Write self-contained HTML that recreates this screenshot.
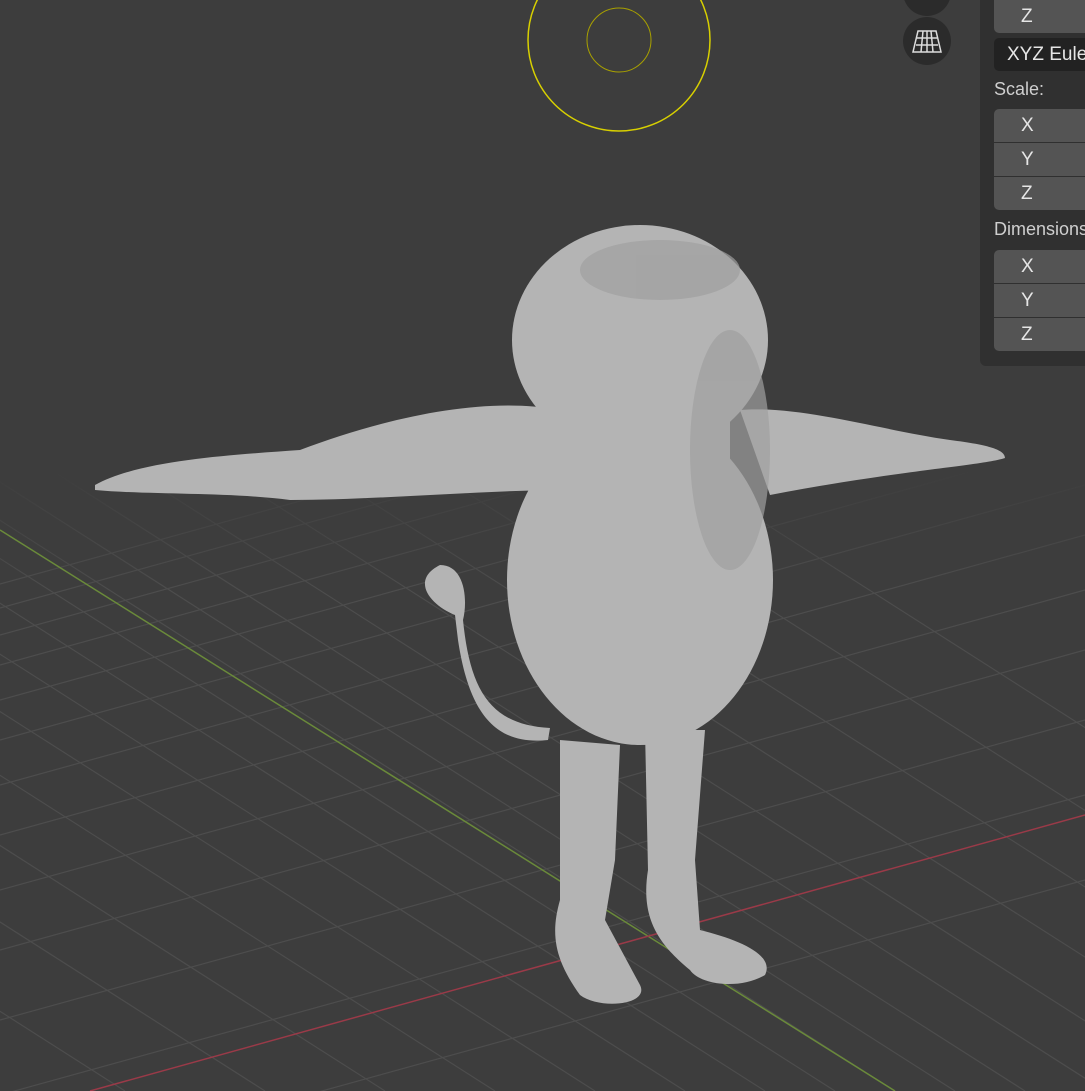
<!DOCTYPE html>
<html style="overflow:hidden"><head><style>
html,body{margin:0;width:1085px;height:1091px;overflow:hidden;background:#3d3d3d;font-family:"Liberation Sans","DejaVu Sans",sans-serif;position:relative}
.p{position:absolute;left:980px;top:0;width:105px;height:366px;background:#303030;border-bottom-left-radius:6px}
.f{position:absolute;left:994px;width:91px;background:#545454;color:#e6e6e6;font-size:19px;box-sizing:border-box;padding-left:27px;height:33px;line-height:33px;white-space:nowrap;overflow:hidden}
.l{position:absolute;left:994px;color:#cfcfcf;font-size:18px;white-space:nowrap}
</style></head><body>
<svg width="1085" height="1091" style="position:absolute;left:0;top:0;display:block">
<defs><linearGradient id="g" x1="0" y1="0" x2="0" y2="1"><stop offset="0" stop-color="#3d3d3d" stop-opacity="1"/><stop offset="1" stop-color="#3d3d3d" stop-opacity="0"/></linearGradient>
<clipPath id="c"><rect x="0" y="470" width="1085" height="621"/></clipPath></defs>
<g stroke="#4d4d4d" stroke-width="1.2" clip-path="url(#c)">
<line x1="-1600" y1="-500" x2="895" y2="1091"/>
<line x1="-1540" y1="-500" x2="955" y2="1091"/>
<line x1="-1470" y1="-500" x2="1025" y2="1091"/>
<line x1="-1390" y1="-500" x2="1105" y2="1091"/>
<line x1="-1300" y1="-500" x2="1195" y2="1091"/>
<line x1="-1200" y1="-500" x2="1295" y2="1091"/>
<line x1="-1090" y1="-500" x2="1405" y2="1091"/>
<line x1="-970" y1="-500" x2="1525" y2="1091"/>
<line x1="-840" y1="-500" x2="1655" y2="1091"/>
<line x1="-1660" y1="-500" x2="835" y2="1091"/>
<line x1="-1730" y1="-500" x2="765" y2="1091"/>
<line x1="-1810" y1="-500" x2="685" y2="1091"/>
<line x1="-1900" y1="-500" x2="595" y2="1091"/>
<line x1="-2000" y1="-500" x2="495" y2="1091"/>
<line x1="-2110" y1="-500" x2="385" y2="1091"/>
<line x1="-2230" y1="-500" x2="265" y2="1091"/>
<line x1="-2370" y1="-500" x2="125" y2="1091"/>
<line x1="0" y1="1180" x2="1085" y2="880"/>
<line x1="0" y1="1095" x2="1085" y2="795"/>
<line x1="0" y1="1020" x2="1085" y2="720"/>
<line x1="0" y1="950" x2="1085" y2="650"/>
<line x1="0" y1="890" x2="1085" y2="590"/>
<line x1="0" y1="835" x2="1085" y2="535"/>
<line x1="0" y1="785" x2="1085" y2="485"/>
<line x1="0" y1="740" x2="1085" y2="440"/>
<line x1="0" y1="700" x2="1085" y2="400"/>
<line x1="0" y1="665" x2="1085" y2="365"/>
<line x1="0" y1="635" x2="1085" y2="335"/>
<line x1="0" y1="608" x2="1085" y2="308"/>
<line x1="0" y1="584" x2="1085" y2="284"/>
</g>
<rect x="0" y="470" width="1085" height="120" fill="url(#g)"/>
<line x1="0" y1="530" x2="895" y2="1091" stroke="#6a8a3a" stroke-width="1.5"/>
<line x1="90" y1="1091" x2="1085" y2="815" stroke="#9a3a48" stroke-width="1.5"/>
<circle cx="619" cy="40" r="91" fill="none" stroke="#d8d000" stroke-width="1.5"/>
<circle cx="619" cy="40" r="32" fill="none" stroke="#a8a000" stroke-width="1"/>
<circle cx="927" cy="41" r="24" fill="#2b2b2b"/>
<circle cx="927" cy="-8" r="24" fill="#2b2b2b"/>
<path d="M913 52 L941 52 L936 31 L918 31 Z M916 45 H938 M917 38 H937 M923 31 L921 52 M927 31 V52 M931 31 L933 52" stroke="#ddd" stroke-width="1.5" fill="none"/>
<g fill="#b4b4b4">
<path d="M95 485 C140 460 230 455 300 450 C380 420 480 395 560 410 L570 490 C480 490 380 500 290 500 C230 492 150 495 95 490Z"/>
<path d="M740 410 C800 405 880 430 950 440 C990 445 1005 450 1005 458 C980 466 900 470 770 495Z"/>
<ellipse cx="640" cy="580" rx="133" ry="165"/>
<ellipse cx="640" cy="340" rx="128" ry="115"/>
<rect x="560" y="400" width="170" height="80"/>
<path d="M560 740 L620 745 L615 860 L605 920 L640 985 C650 1005 600 1010 580 995 C555 960 550 935 560 900Z"/>
<path d="M645 730 L705 730 L695 860 L700 930 C740 940 775 955 765 975 C740 990 700 985 690 970 C660 945 640 920 648 870Z"/>
<path d="M548 740 C500 745 470 720 458 640 L455 615 C430 605 410 580 440 565 C465 565 468 600 463 620 C470 690 490 725 550 728Z"/>
</g>
<g fill="#a0a0a0" opacity="0.7">
<ellipse cx="730" cy="450" rx="40" ry="120"/>
<ellipse cx="660" cy="270" rx="80" ry="30"/>
</g>
</svg>
<div class="p"></div>
<div class="f" style="top:0;border-radius:0 0 0 5px">Z</div>
<div class="f" style="top:38px;background:#222;padding-left:13px;border-radius:5px 0 0 5px">XYZ Euler</div>
<div class="l" style="top:79px">Scale:</div>
<div class="f" style="top:109px;border-radius:5px 0 0 0">X</div>
<div class="f" style="top:143px">Y</div>
<div class="f" style="top:177px;border-radius:0 0 0 5px">Z</div>
<div class="l" style="top:219px;width:91px;overflow:hidden">Dimensions:</div>
<div class="f" style="top:250px;border-radius:5px 0 0 0">X</div>
<div class="f" style="top:284px">Y</div>
<div class="f" style="top:318px;border-radius:0 0 0 5px">Z</div>
</body></html>
